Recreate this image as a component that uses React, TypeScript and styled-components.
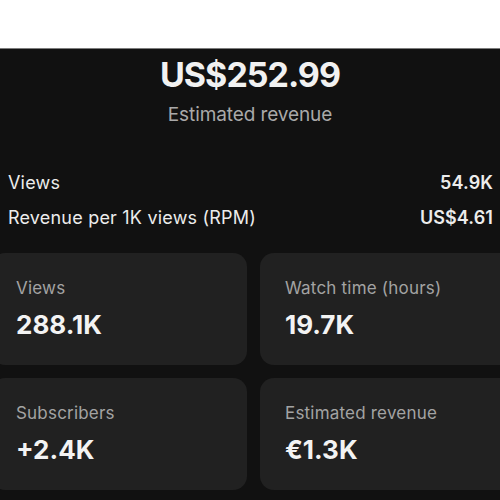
import React from "react";
import styled, { createGlobalStyle } from "styled-components";

const Global = createGlobalStyle`
  html, body { margin: 0; padding: 0; background: #ffffff; }
  body { font-family: Inter, "Noto Sans", sans-serif; -webkit-font-smoothing: antialiased; }
  * { box-sizing: border-box; }
`;

const Page = styled.div`
  width: 500px;
  height: 500px;
  overflow: hidden;
  display: flex;
  flex-direction: column;
`;

const TopBar = styled.div`
  height: 49px;
  flex: none;
  background: #ffffff;
  border-bottom: 1px solid #7c7c7c;
`;

const Main = styled.div`
  flex: 1;
  background: #111111;
  display: flex;
  flex-direction: column;
  padding-top: 6px;
`;

const Hero = styled.div`
  display: flex;
  flex-direction: column;
  align-items: center;
  gap: 8px;
`;

const Amount = styled.div`
  font-size: 34px;
  line-height: 40px;
  font-weight: 700;
  letter-spacing: -1px;
  color: #f1f1f1;
`;

const Caption = styled.div`
  font-size: 19px;
  line-height: 24px;
  letter-spacing: -0.1px;
  color: #a9a9a9;
`;

const Summary = styled.div`
  display: flex;
  flex-direction: column;
  gap: 10.5px;
  padding: 0 7px 0 8px;
  margin-top: 44px;
`;

const Row = styled.div`
  display: flex;
  justify-content: space-between;
  font-size: 18px;
  line-height: 24px;
  letter-spacing: 0.2px;
  color: #ececec;
`;

const RowValue = styled.span`
  font-weight: 600;
  letter-spacing: 0.1px;
`;

const Grid = styled.div`
  display: grid;
  grid-template-columns: 256px 256px;
  column-gap: 13px;
  row-gap: 13px;
  margin-left: -9px;
  margin-top: 23.5px;
`;

const Card = styled.div`
  background: #212121;
  border-radius: 14px;
  height: 112px;
  padding: 24px 25px 0;
  display: flex;
  flex-direction: column;
  gap: 10px;
`;

const Label = styled.div`
  font-size: 17px;
  line-height: 22px;
  letter-spacing: 0.2px;
  color: #a3a3a3;
`;

const Value = styled.div`
  font-size: 26px;
  line-height: 32px;
  font-weight: 700;
  color: #f3f3f3;
`;

const cards = [
  { label: "Views", value: "288.1K" },
  { label: "Watch time (hours)", value: "19.7K" },
  { label: "Subscribers", value: "+2.4K" },
  { label: "Estimated revenue", value: "€1.3K" },
];

export default function App() {
  return (
    <Page>
      <Global />
      <TopBar />
      <Main>
        <Hero>
          <Amount>US$252.99</Amount>
          <Caption>Estimated revenue</Caption>
        </Hero>
        <Summary>
          <Row>
            <span>Views</span>
            <RowValue>54.9K</RowValue>
          </Row>
          <Row>
            <span>Revenue per 1K views (RPM)</span>
            <RowValue>US$4.61</RowValue>
          </Row>
        </Summary>
        <Grid>
          {cards.map((c) => (
            <Card key={c.label}>
              <Label>{c.label}</Label>
              <Value>{c.value}</Value>
            </Card>
          ))}
        </Grid>
      </Main>
    </Page>
  );
}
